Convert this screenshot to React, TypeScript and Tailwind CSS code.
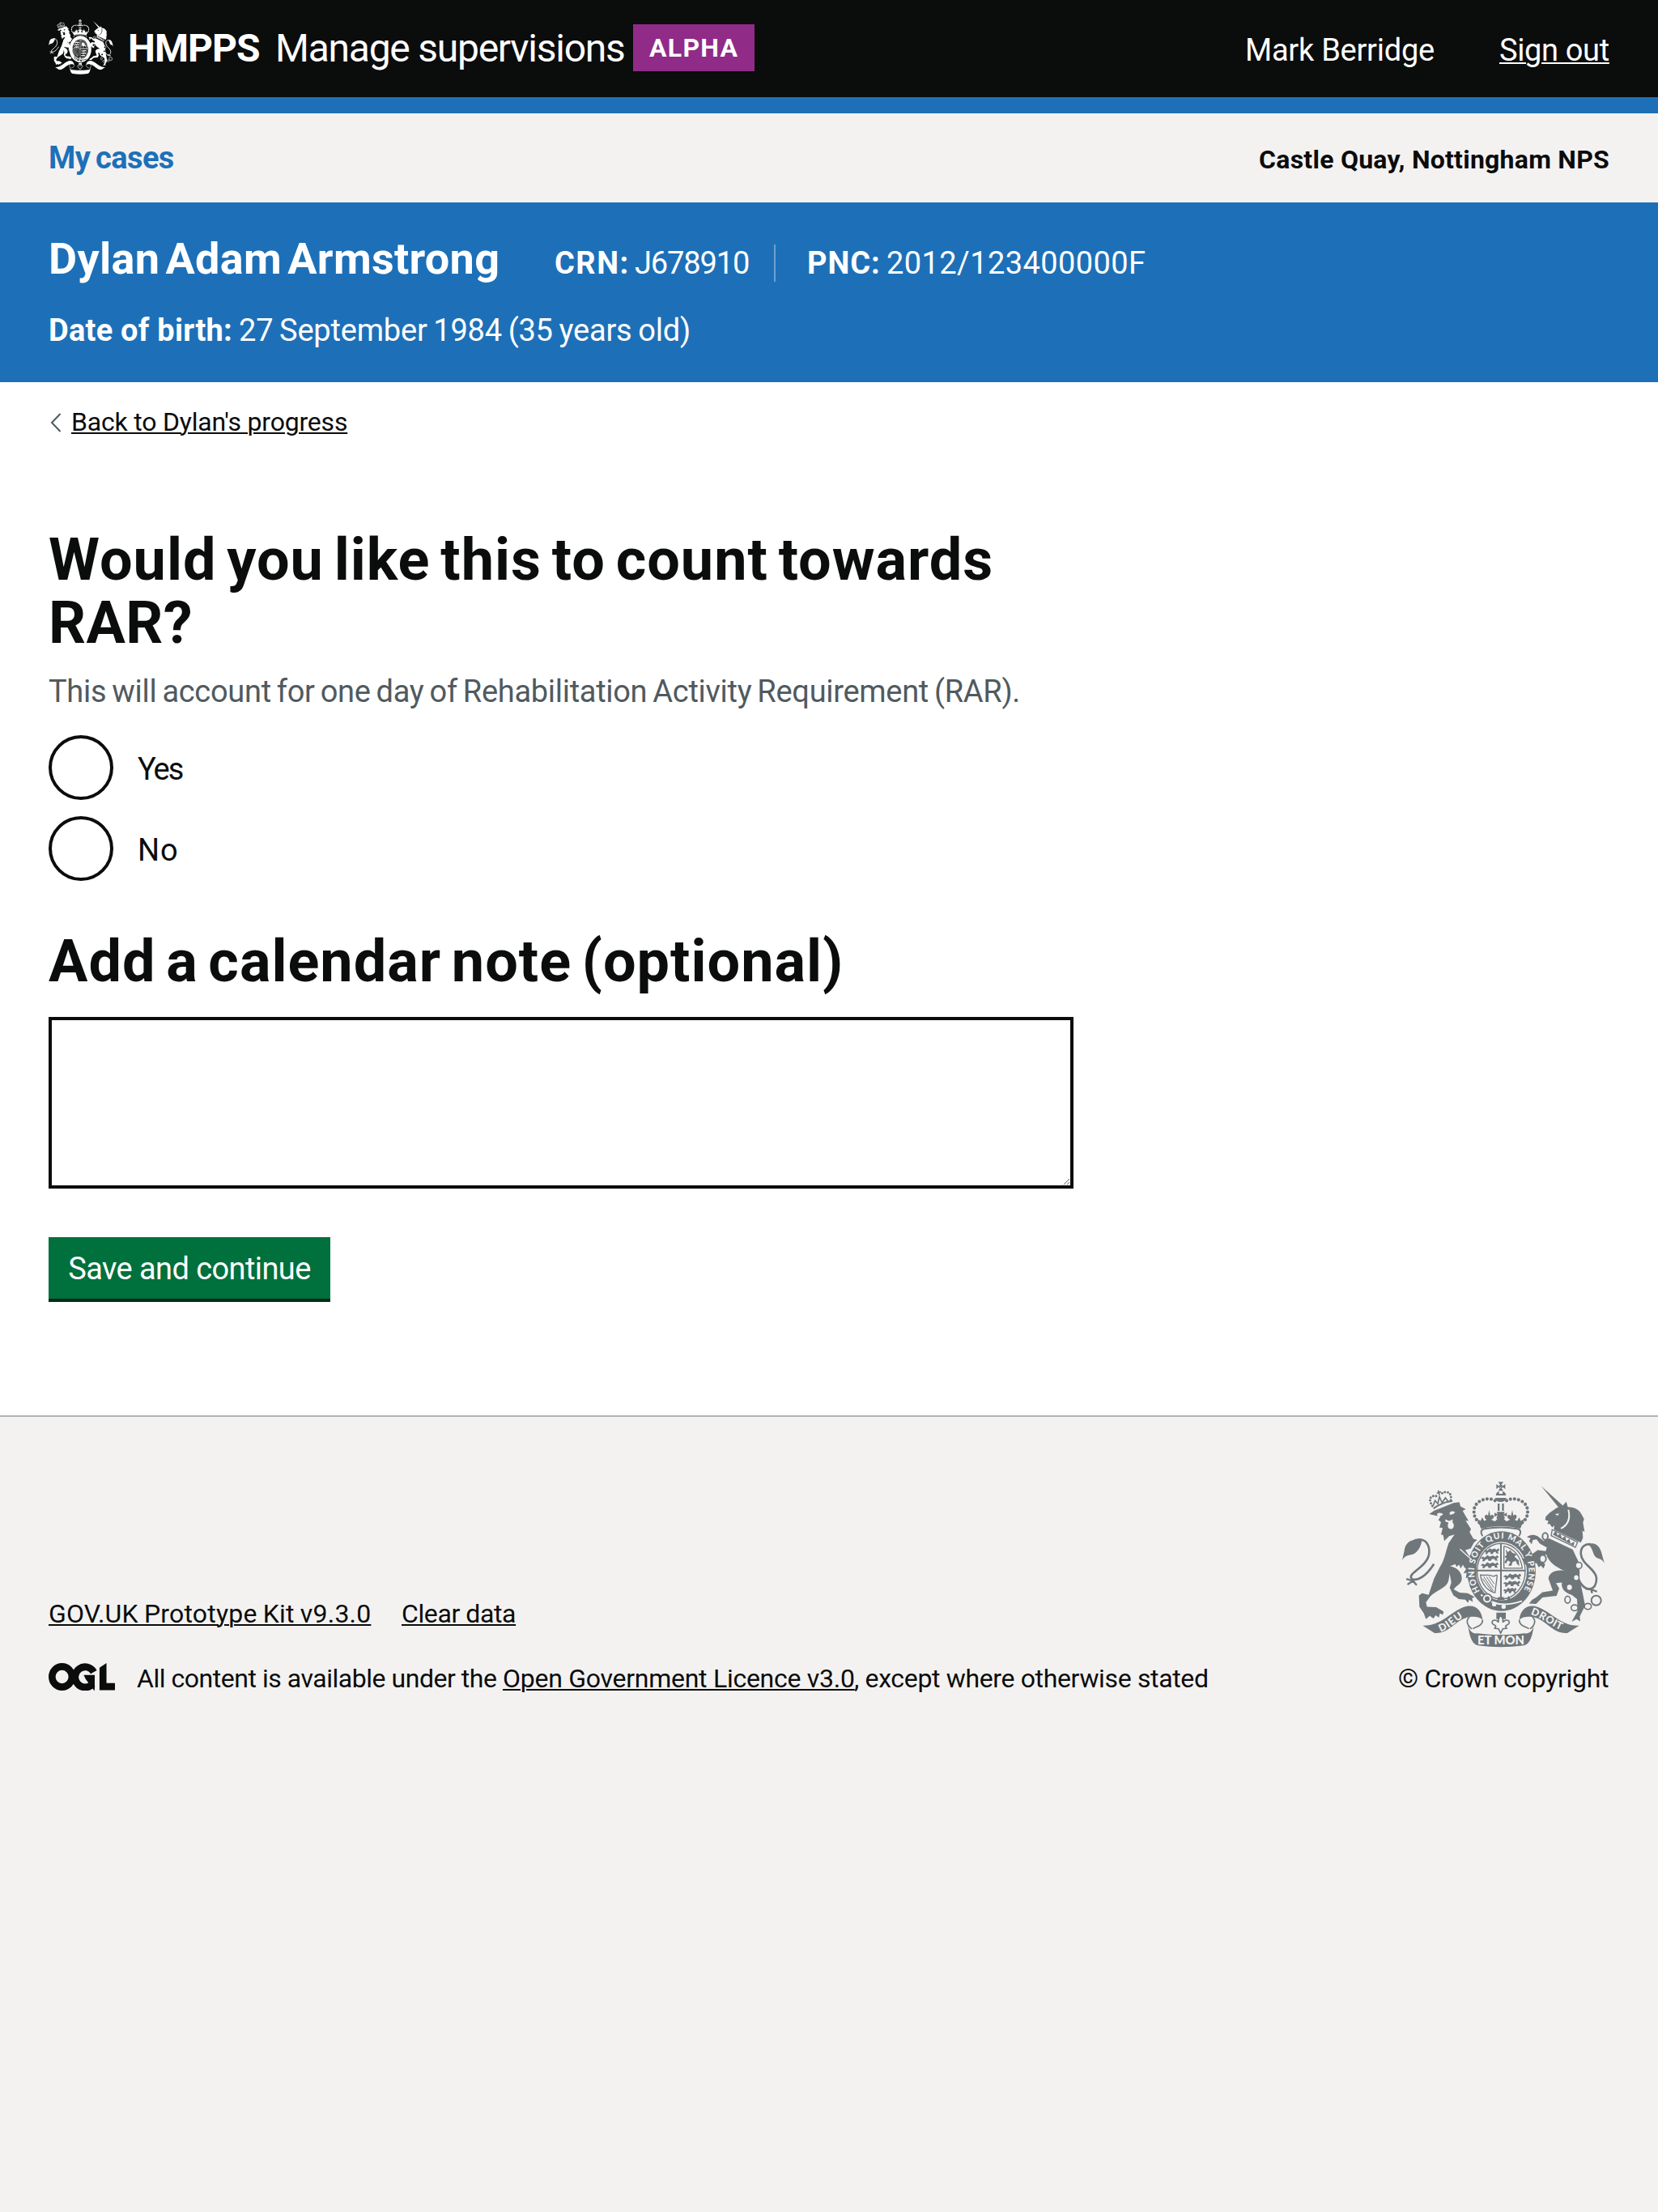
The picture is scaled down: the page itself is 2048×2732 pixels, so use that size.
import React from 'react';

const LION_ROW = 'M0 14l8-6 6 4 8-9 8 5 10-4 8 5 6-6 5 8-7 4 4 8h-8l-4-7-8 2-2 6h-8l-2-7-8 2-3 6h-7l2-8z';

function Crest({
  className,
  paper,
  lettered,
}: {
  className: string;
  paper: string;
  lettered?: boolean;
}) {
  return (
    <svg
      className={className}
      viewBox="96 88 750 616"
      preserveAspectRatio="none"
      fill="currentColor"
      aria-hidden="true"
    >
      {/* imperial crown */}
      <path d="M458 106L445 97v18zM465 106l13-9v18zM461 103l-9-14h19zM461 108l-9 14h19zM456 100h11v12h-11z" />
      <path d="M443 139c1-9 6-14 12-15v9h13v-9c7 1 12 6 13 15z" />
      <path d="M440 148h42c-2 10-10 15-21 15s-19-5-21-15z" />
      <g fill="none" stroke="currentColor" strokeWidth="12.500" strokeLinecap="round" strokeDasharray="0 15.2">
        <path d="M440 158C412 142 362 158 362 198c0 20 8 33 22 44" />
        <path d="M483 158c28-16 78 0 78 40 0 20-8 33-22 44" />
      </g>
      <path d="M450 169h7v27h-7zM466 169h7v27h-7z" />
      <path d="M388 262l-14-36 13 8 5-14 8 14 9-5c-9-6-9-14-3-18 5-2 8 2 8 5l4-23 5 23c2-5 9-7 12-2 3 6-2 12-9 15l14 6 9-9-4-3 5-11-12 6v-15l12 6-4-9h30l-4 9 12-6v15l-12-6 5 11-4 3 9 9 14-6c-7-3-12-9-9-15 3-5 10-3 12 2l5-23 4 23c0-3 4-7 9-5 5 4 5 12-4 18l9 5 8-14 5 14 13-8-14 36q-73-18-146 0z" />
      <path
        d="M394 290c-8-12-8-24 6-27q61-10 123 0c14 3 14 15 6 27"
        fill="none"
        stroke="currentColor"
        strokeWidth="6"
      />

      {/* garter and shield */}
      <ellipse cx="464" cy="420" rx="127" ry="148" />
      <ellipse cx="464" cy="420" rx="94" ry="109" fill={paper} />
      <ellipse cx="463" cy="420" rx="89" ry="103" fill="none" stroke="currentColor" strokeWidth="4" />
      <path d="M462 316v208M373 418h180" stroke="currentColor" strokeWidth="6" />
      <path d="M473 327v82h70M473 327c35 8 62 36 68 82" fill="none" stroke="currentColor" strokeWidth="4" />
      <g>
        <path transform="translate(398 332)" d={LION_ROW} />
        <path transform="translate(386 358) scale(1.15 1)" d={LION_ROW} />
        <path transform="translate(386 384) scale(1.15 1)" d={LION_ROW} />
        <path transform="translate(470 426) scale(1.15 1)" d={LION_ROW} />
        <path transform="translate(470 452) scale(1.1 1)" d={LION_ROW} />
        <path transform="translate(470 478) scale(.85 1)" d={LION_ROW} />
        <path d="M480 338l8 12 8-8 8 10 16 6-8 8 16 14 2 22-9-10-4-10-12 4-4 14-12 0 8-14-10-6-6 12-6-5 8-14-8-6 8-6z" />
      </g>
      <g fill="none" stroke="currentColor" strokeWidth="4">
        <path d="M386 434c12 4 30-4 44 4 8 4 16-8 18 0l-8 62c-28-6-50-32-54-66z" />
        <path d="M398 440l36 54M408 440l28 42M418 440l20 28M394 448l36 48" strokeWidth="3" />
      </g>
      <path d="M452 516h20l4 12h-28zM490 512l8 10-14 6z" />
      <path d="M388 507c34 34 82 48 152 24" fill="none" stroke={paper} strokeWidth="6" />
      <circle cx="411" cy="522" r="20" />
      <circle cx="411" cy="522" r="12" fill="none" stroke={paper} strokeWidth="6" />
      <circle cx="437" cy="543" r="8" fill={paper} />
      <circle cx="472" cy="552" r="8" fill={paper} />
      <path d="M445 574h35v24h-35z" />
      <path
        d="M461 584c8 8 10 16 8 26 6-10 22-12 24 0 0 10-10 8-14 14l4 8-14 2-8 16-8-16-14-2 4-8c-4-6-14-4-14-14 2-12 18-10 24 0-2-10 0-18 8-26z"
        fill={paper}
        stroke="currentColor"
        strokeWidth="5"
      />

      {/* lion */}
      <g fill="none" stroke="currentColor" strokeLinecap="round">
        <path d="M208 178C190 152 202 136 226 142" strokeWidth="9" strokeDasharray="0 11" />
        <path d="M276 156C282 128 260 118 240 134" strokeWidth="9" strokeDasharray="0 11" />
        <path d="M212 174l6-16 10 12 6-26 10 22 12-18 10 12M226 130l12-4M230 122l4 14" strokeWidth="5" />
        <path d="M214 186q30-22 66-26" strokeWidth="6" />
      </g>
      <path d="M196 208l20-13 70-28 22-3 4 16 20 10-12 6 22 38-11-2 20 32-5 12 14 24 14 4-12 10-12 22-20 6 28 42 14 24-2 40-12-6-4 14-10-14-12 4 3-20-12 2 10-16-8-8-4-8-8 14-6-14-10 8-4-10-20 8c22 2 44 20 44 44 0 24-22 26-30 42l22 12 30 2 26 14-10 4 3 14-14-8-4 12-10-12-24-2-20-14-14-28 6-20-6-34-4 26c-6 30-46 36-68 60l-16 22 4 16 34 2 28 16-4 12-10-6-4 16-12-8-8 12-14-10-14 12-8-22-16-24-2-42 12-8 24 6 20-60 22-44c16-22 22-60 32-88l22-32-20 6-18 18-4-22-8-2 6-24-12-2 6-20-10-8 8-12z" />
      <path d="M226 206q14-6 22 4-12 10-22 6zM272 202q12-8 20 0-8 10-20 8zM256 228l14 6 14-6-2 10c8 6 8 26-6 26s-12-18-8-24l-12-4z" fill={paper} />
      <path d="M310 338l44 40" stroke={paper} strokeWidth="4" />
      <g fill="none" stroke="currentColor" strokeLinecap="round">
        <path d="M212 396c-26 40-56 62-80 53-22-20 60-44 64-96 2-32-14-52-38-50" strokeWidth="8" />
        <path d="M114 450l22 6-18 12M136 456l12 14" strokeWidth="7" />
      </g>
      <path d="M170 304c-10-8-24-4-32 0-22 4-32 22-34 40l-8 36c8-14 16-18 30-20 26-4 38-28 44-56z" />

      {/* unicorn */}
      <path d="M611 104l82 74-12 12z" />
      <path d="M690 178l14-16 6 20c22 0 42 10 50 26l10 18-4 14 6 34-8-4 2 26-8 18-100-48 2-16-8 8-10-14-8 2 4-12-12-4 2-12 14-14 28-20z" />
      <path d="M712 192c8 34-4 58-28 70" fill="none" stroke={paper} strokeWidth="6" />
      <path d="M662 208l16-2-6 8z" fill={paper} />
      <path d="M652 266l94 46-8 20-90-44z" fill={paper} stroke="currentColor" strokeWidth="4" />
      <path d="M654 284l12-14 6 18 10-8 6 18 12-8 4 18 12-8 4 18 14-8-2 16z" />
      <path d="M640 298l88 42 14 30c16 26 10 60 12 80l12 58 8 40-20 40 2 18-14-8-18 10 22-40-2-44-20-16c-26-8-40-24-36-46l-22 2 12 20-10 28-52 6-24 24-26-2 12-14 14-8 24-20 38-6-16-44c2-22 24-34 58-30-34-14-58-34-66-60l-28 18 24 18-6 16-10-10-8 6-8-16-20 4 2 18-20-12-16-24 30-14 28-20 30 4 4-14-26-14-12-16-14 2-4 16-10-12 6-10-14-4c12-12 28-10 40-4l22 18z" />
      <g fill="none" stroke="currentColor">
        <path d="M750 452c26 52 68 40 66-6-2-34-56-50-58-92 0-24 16-36 36-34" strokeWidth="8" />
        <path d="M776 486l20 2 4 14M796 488l22 8" strokeWidth="7" />
        <ellipse cx="626" cy="291" rx="10" ry="13" strokeWidth="6" />
        <ellipse cx="617" cy="374" rx="12" ry="14" strokeWidth="6" fill={paper} />
        <circle cx="750" cy="399" r="12" strokeWidth="5" fill={paper} />
        <ellipse cx="709" cy="526" rx="10" ry="13" strokeWidth="5" />
        <ellipse cx="735" cy="556" rx="13" ry="11" strokeWidth="5" />
        <ellipse cx="784" cy="551" rx="13" ry="11" strokeWidth="5" />
        <circle cx="815" cy="529" r="18" strokeWidth="6" />
      </g>
      <path d="M784 322c10-8 30-6 38 6 14 14 14 36 24 62-8-12-16-16-26-18-20-6-14-40-36-50z" />
      <ellipse cx="741" cy="444" rx="8" ry="9" fill={paper} />
      <ellipse cx="716" cy="480" rx="9" ry="10" fill={paper} />

      {/* motto scroll */}
      <path d="M172 622c70 4 110-60 164-72 34-6 54 16 58 50-14-12-30-12-48-10-52 8-74 64-130 60z" />
      <path d="M752 622c-70 4-110-60-164-72-34-6-54 16-58 50 14-12 30-12 48-10 52 8 74 64 130 60z" />
      <path d="M338 604q4 50 36 47 88 12 176 0 32 3 36-47c-6 62-18 88-40 92q-84 12-168 0c-22-4-34-30-40-92z" />
      <path
        d="M394 600c0 26-28 26-36 34M346 590c-14 10-12 30 8 44M530 600c0 26 28 26 36 34M578 590c14 10 12 30-8 44"
        fill="none"
        stroke="currentColor"
        strokeWidth="5"
      />

      {lettered && (
        <g fill={paper} fontFamily="Lato, sans-serif" fontWeight="900">
          <defs>
            <path id="garter" d="M384.400 494.500A101 121 0 1 1 517.500 522.600" />
            <path id="scroll-left" d="M238 645C284 630 304 592 356 577" />
            <path id="scroll-right" d="M571 581C622 594 650 632 706 645" />
          </defs>
          <text fontSize="31" textLength="500">
            <textPath href="#garter">HONI SOIT QUI MAL Y PENSE</textPath>
          </text>
          <text fontSize="38" letterSpacing="3">
            <textPath href="#scroll-left">DIEU</textPath>
          </text>
          <text fontSize="38" letterSpacing="2">
            <textPath href="#scroll-right">DROIT</textPath>
          </text>
          <text x="375" y="691" fontSize="44" textLength="174" lengthAdjust="spacingAndGlyphs">
            ET MON
          </text>
        </g>
      )}
    </svg>
  );
}

function OglLogo() {
  return (
    <svg className="-mt-1 h-[34px] w-[82px]" viewBox="0 0 483.2 195.7" preserveAspectRatio="none" aria-label="OGL" fill="none" stroke="currentColor" strokeWidth="50.7">
      <circle cx="97.8" cy="97.8" r="72.4" />
      <path d="M329 64.400A72.400 72.400 0 1 0 320 148" />
      <path d="M255.700 85.500h80v87.800l-1 22-3 0-62-82z" fill="currentColor" stroke="none" />
      <path d="M421.500 0v142.800h61.700v50.700H370.800V32.400z" fill="currentColor" stroke="none" />
    </svg>
  );
}

function Header() {
  return (
    <header className="flex h-[140px] items-center justify-between border-b-[20px] border-[#1d70b8] bg-[#0b0c0c] px-[60px] text-white">
      <div className="flex items-center">
        <Crest className="-mt-1 mr-[18px] h-[68px] w-[80px]" paper="#0b0c0c" />
        <span className="w-[182px] text-[48px] leading-[120px] font-bold tracking-[-0.95px]">HMPPS</span>
        <span className="w-[442px] text-[48px] leading-[120px] tracking-[-1.25px] whitespace-nowrap">
          Manage supervisions
        </span>
        <strong className="-mt-[2px] h-[58px] w-[150px] bg-[#912b88] pl-5 text-[32px] leading-[58px] font-bold tracking-[1.3px]">
          ALPHA
        </strong>
      </div>
      <nav className="flex pt-[3px] text-[38px] leading-[50px] whitespace-nowrap">
        <span className="w-[314px] tracking-[-0.25px]">Mark Berridge</span>
        <a className="w-[136px] tracking-[-0.35px] underline decoration-2 underline-offset-2">Sign out</a>
      </nav>
    </header>
  );
}

function CaseBanner() {
  return (
    <section className="h-[222px] bg-[#1d70b8] px-[60px] pt-[37px] text-[38px] text-white">
      <div className="flex items-baseline whitespace-nowrap">
        <h2 className="w-[625px] text-[54px] leading-[66px] font-bold tracking-[0.3px] [word-spacing:-6.5px]">
          Dylan Adam Armstrong
        </h2>
        <b className="w-[99px] tracking-[1.5px]">CRN:</b>
        <span className="w-[172px] tracking-[-1.12px]">J678910</span>
        <span className="mt-[15px] mr-[39px] h-[46px] w-[2px] self-start bg-[#6da0d0]" />
        <b className="w-[98px] tracking-[0.94px]">PNC:</b>
        <span className="tracking-[0.41px]">2012/123400000F</span>
      </div>
      <div className="mt-[29px] flex leading-[50px] whitespace-nowrap">
        <b className="w-[235px] tracking-[0.25px]">Date of birth:</b>
        <span className="tracking-[-0.2px] [word-spacing:-1.5px]">27 September 1984 (35 years old)</span>
      </div>
    </section>
  );
}

function Radio({ label, tracking }: { label: string; tracking: string }) {
  return (
    <label className="flex h-20 items-center">
      <span className="size-20 rounded-full border-4 border-[#0b0c0c]" />
      <span className={'pt-[3px] pl-[30px] text-[38px] leading-[50px] ' + tracking}>{label}</span>
    </label>
  );
}

function Footer() {
  const link = 'underline decoration-2 underline-offset-2';
  return (
    <footer className="flex flex-1 items-start justify-between border-t-2 border-[#b1b4b6] bg-[#f3f2f1] px-[60px] text-[32px] leading-10 whitespace-nowrap">
      <div className="pt-[223px]">
        <div className="flex gap-[37px]">
          <a className={'w-[399px] tracking-[0.2px] [word-spacing:-1px] ' + link}>GOV.UK Prototype Kit v9.3.0</a>
          <a className={'tracking-[-0.4px] ' + link}>Clear data</a>
        </div>
        <div className="mt-10 flex items-center">
          <OglLogo />
          <span className="ml-[27px] w-[452px] tracking-[-0.47px]">All content is available under the</span>
          <a className={'w-[434px] tracking-[-0.27px] ' + link}>Open Government Licence v3.0</a>
          <span className="tracking-[-0.35px]">, except where otherwise stated</span>
        </div>
      </div>
      <div className="w-[261px] pt-20">
        <Crest className="ml-[5px] h-[205px] w-[250px] text-[#6f777b]" paper="#f3f2f1" lettered />
        <p className="mt-[18px] tracking-[-0.28px]">© Crown copyright</p>
      </div>
    </footer>
  );
}

export default function App() {
  return (
    <div className="flex min-h-[2732px] w-[2048px] flex-col bg-white font-[Roboto,sans-serif] text-[#0b0c0c]">
      <Header />
      <div className="flex h-[110px] items-center justify-between bg-[#f3f2f1] px-[60px] font-bold">
        <a className="text-[38px] tracking-[-0.6px] text-[#1d70b8] [word-spacing:-2px]">My cases</a>
        <span className="pt-1 text-[32px] tracking-[0.25px]">Castle Quay, Nottingham NPS</span>
      </div>
      <CaseBanner />
      <main className="flex flex-col items-start px-[60px] pt-[29px] pb-36">
        <a className="flex h-10 items-center text-[32px] leading-10 tracking-[-0.2px]">
          <svg className="mt-[2px] mr-3 h-6 w-4" viewBox="0 0 16 24" fill="none" stroke="#505a5f" strokeWidth="2">
            <path d="M14.500 1L4 12l10.500 11" />
          </svg>
          <span className="underline decoration-2 underline-offset-2">Back to Dylan's progress</span>
        </a>
        <h1 className="mt-28 w-[1300px] text-[72px] leading-[78px] font-bold tracking-[1px] [word-spacing:-6.1px]">
          Would you like this to count towards
          <br />
          <span className="tracking-[0.4px]">RAR?</span>
        </h1>
        <p className="mt-5 text-[38px] leading-[50px] tracking-[-0.3px] whitespace-nowrap text-[#505a5f] [word-spacing:-2.1px]">
          This will account for one day of Rehabilitation Activity Requirement (RAR).
        </p>
        <div className="mt-[29px] flex flex-col gap-5">
          <Radio label="Yes" tracking="tracking-[-2px]" />
          <Radio label="No" tracking="tracking-[0.8px]" />
        </div>
        <h2 className="mt-[61px] text-[72px] leading-[78px] font-bold tracking-[1px] [word-spacing:-6.2px]">
          Add a calendar note (optional)
        </h2>
        <textarea className="mt-[29px] block h-[212px] w-[1266px] resize-y border-4 border-[#0b0c0c]" />
        <button className="mt-[60px] h-[76px] w-[348px] bg-[#00703c] pt-[2px] text-[38px] leading-[50px] tracking-[-0.59px] text-white shadow-[0_4px_0_#002d18]">
          Save and continue
        </button>
      </main>
      <Footer />
    </div>
  );
}
